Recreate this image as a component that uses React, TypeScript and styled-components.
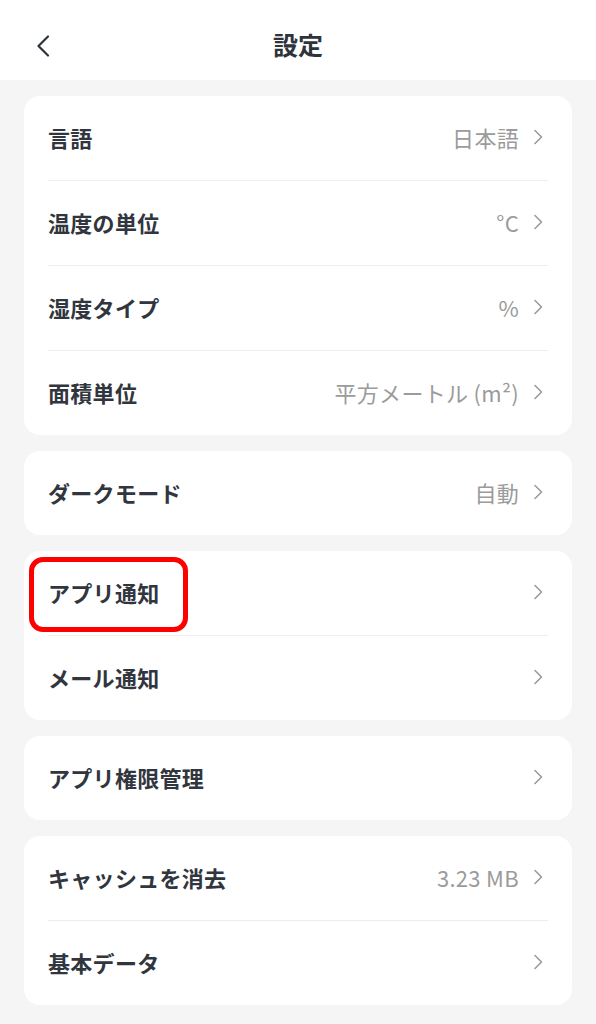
import React from "react";
import styled, { createGlobalStyle } from "styled-components";

const GlobalStyle = createGlobalStyle`
  html, body {
    margin: 0;
    padding: 0;
    background: #f5f5f5;
  }
  body {
    font-family: "Noto Sans CJK JP", "Noto Sans", sans-serif;
    -webkit-font-smoothing: antialiased;
  }
`;

const Page = styled.div`
  width: 596px;
  min-height: 1024px;
  background: #f5f5f5;
`;

const Header = styled.header`
  height: 80px;
  background: #ffffff;
  display: grid;
  grid-template-columns: 80px 1fr 80px;
  align-items: center;
`;

const BackButton = styled.div`
  display: flex;
  align-items: center;
  padding-left: 36px;
  height: 100%;
  padding-top: 12px;
  box-sizing: border-box;
`;

const Title = styled.h1`
  margin: 0;
  text-align: center;
  font-size: 25px;
  font-weight: 700;
  color: #2f343c;
  line-height: 1;
  padding-top: 8px;
`;

const List = styled.main`
  display: flex;
  flex-direction: column;
  gap: 16px;
  padding: 16px 24px 20px;
`;

const Card = styled.section`
  background: #ffffff;
  border-radius: 16px;
  display: flex;
  flex-direction: column;
`;

const Row = styled.div<{ $divider?: boolean }>`
  position: relative;
  height: 84px;
  padding: 0 29px 3px 24px;
  display: flex;
  align-items: center;
  justify-content: space-between;
  box-sizing: border-box;
  ${(p) =>
    p.$divider
      ? `
  &::after {
    content: "";
    position: absolute;
    left: 24px;
    right: 24px;
    bottom: -1px;
    height: 1px;
    background: #ededed;
  }
  margin-bottom: 1px;
  `
      : ""}
`;

const Label = styled.span`
  font-size: 22px;
  line-height: 1;
  font-weight: 700;
  color: #31363e;
  letter-spacing: 0.3px;
`;

const Trail = styled.div`
  display: flex;
  align-items: center;
  gap: 14px;
`;

const Value = styled.span`
  font-size: 22px;
  line-height: 1;
  font-weight: 400;
  color: #9b9b9b;
  letter-spacing: 0.3px;
`;

const Highlight = styled.div`
  position: absolute;
  left: 5px;
  top: 6px;
  width: 159px;
  height: 75px;
  border: 5px solid #ff0000;
  border-radius: 14px;
  box-sizing: border-box;
  pointer-events: none;
`;

const Chevron = () => (
  <svg width="10" height="16" viewBox="0 0 10 16" fill="none">
    <polyline
      points="2,1.5 8.5,8 2,14.5"
      stroke="#9b9b9b"
      strokeWidth="1.6"
      strokeLinecap="round"
      strokeLinejoin="round"
    />
  </svg>
);

const BackIcon = () => (
  <svg width="14" height="22" viewBox="0 0 14 22" fill="none">
    <polyline
      points="12,1.5 2.5,11 12,20.5"
      stroke="#2f343c"
      strokeWidth="2.2"
      strokeLinecap="round"
      strokeLinejoin="round"
    />
  </svg>
);

type Item = { label: string; value?: string; highlight?: boolean };

const groups: Item[][] = [
  [
    { label: "言語", value: "日本語" },
    { label: "温度の単位", value: "°C" },
    { label: "湿度タイプ", value: "%" },
    { label: "面積単位", value: "平方メートル (m²)" },
  ],
  [{ label: "ダークモード", value: "自動" }],
  [{ label: "アプリ通知", highlight: true }, { label: "メール通知" }],
  [{ label: "アプリ権限管理" }],
  [{ label: "キャッシュを消去", value: "3.23 MB" }, { label: "基本データ" }],
];

export default function App() {
  return (
    <>
      <GlobalStyle />
      <Page>
        <Header>
          <BackButton>
            <BackIcon />
          </BackButton>
          <Title>設定</Title>
          <div />
        </Header>
        <List>
          {groups.map((g, gi) => (
            <Card key={gi}>
              {g.map((item, i) => (
                <Row key={item.label} $divider={i < g.length - 1}>
                  <Label>{item.label}</Label>
                  <Trail>
                    {item.value && <Value>{item.value}</Value>}
                    <Chevron />
                  </Trail>
                  {item.highlight && <Highlight />}
                </Row>
              ))}
            </Card>
          ))}
        </List>
      </Page>
    </>
  );
}
